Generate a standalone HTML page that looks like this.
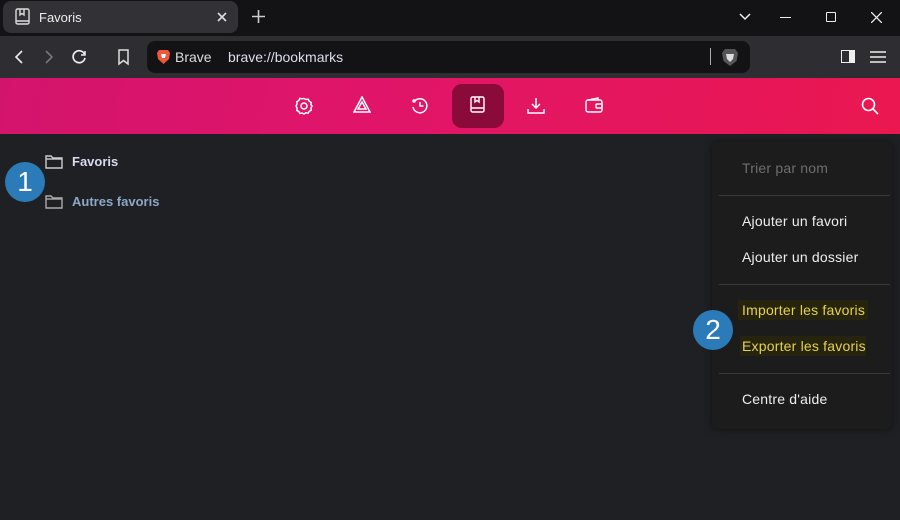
<!DOCTYPE html>
<html><head><style>
*{margin:0;padding:0;box-sizing:border-box}
body{width:900px;height:520px;overflow:hidden;background:#1f2023;font-family:"Liberation Sans",sans-serif;position:relative}
.abs{position:absolute}
svg{position:absolute}
.mi{position:absolute;left:742px;font-size:14px;letter-spacing:0.2px;color:#eeeeee;font-weight:500}
</style></head><body>
<div class="abs" style="left:0;top:0;width:900px;height:36px;background:#131316"></div>
<div class="abs" style="left:3px;top:1px;width:235px;height:32px;background:#323236;border-radius:8px"></div>
<svg style="left:15px;top:8px" width="16" height="18" viewBox="0 0 16 18" fill="none" stroke="#ddd" stroke-width="1.4"><rect x="1" y="1" width="13" height="15" rx="1.5"/><path d="M1 13h13M5 1v6l2-1.5 2 1.5V1"/></svg>
<div class="abs" style="left:39px;top:10px;font-size:13px;color:#eee">Favoris</div>
<svg style="left:217px;top:12px" width="10" height="10" stroke="#ddd" stroke-width="1.6"><path d="M1 1l8 8M9 1l-8 8"/></svg>
<svg style="left:252px;top:10px" width="13" height="13" stroke="#ccc" stroke-width="1.6"><path d="M6.5 0v13M0 6.5h13"/></svg>
<svg style="left:739px;top:13px" width="12" height="8" fill="none" stroke="#eee" stroke-width="1.5"><path d="M1 1l5 5 5-5"/></svg>
<div class="abs" style="left:780px;top:17px;width:11px;height:1px;background:#eee"></div>
<div class="abs" style="left:826px;top:12px;width:10px;height:10px;border:1.3px solid #eee;border-radius:1px"></div>
<svg style="left:871px;top:12px" width="11" height="11" stroke="#eee" stroke-width="1.3"><path d="M0 0l11 11M11 0L0 11"/></svg>
<div class="abs" style="left:0;top:36px;width:900px;height:42px;background:#2e2e32"></div>
<svg style="left:14px;top:50px" width="10" height="14" fill="none" stroke="#eee" stroke-width="1.6"><path d="M8 1L2 7l6 6"/></svg>
<svg style="left:44px;top:50px" width="10" height="14" fill="none" stroke="#777" stroke-width="1.6"><path d="M2 1l6 6-6 6"/></svg>
<svg style="left:71px;top:49px" width="16" height="16" fill="none" stroke="#eee" stroke-width="1.7"><path d="M13.5 5A6 6 0 1 0 14 9"/><path d="M14 2v4h-4" stroke-width="1.5"/></svg>
<svg style="left:117px;top:49px" width="14" height="17" fill="none" stroke="#ddd" stroke-width="1.5"><path d="M2 1h9v14l-4.5-3.5L2 15z"/></svg>
<div class="abs" style="left:147px;top:41px;width:603px;height:32px;background:#131316;border-radius:8px"></div>
<svg style="left:157px;top:49px" width="13" height="15" viewBox="0 0 13 15"><path d="M2 1h9l2 3-1 6-5.5 5L1 10 0 4z" fill="#f1563a"/><path d="M4 5h5l-1 4H5z" fill="#fff"/></svg>
<div class="abs" style="left:175px;top:49px;font-size:14px;color:#ddd">Brave</div>
<div class="abs" style="left:228px;top:49px;font-size:14px;color:#dde">brave://bookmarks</div>
<div class="abs" style="left:710px;top:48px;width:1px;height:17px;background:#aaa"></div>
<svg style="left:722px;top:48px" width="16" height="18" viewBox="0 0 16 18"><path d="M3 1h10l3 4-1.5 8L8 18 1.5 13 0 5z" fill="#555"/><path d="M4 6h8l-1 5-3 3-3-3z" fill="#ddd"/></svg>
<div class="abs" style="left:841px;top:50px;width:14px;height:13px;border:1.5px solid #eee"></div>
<div class="abs" style="left:849px;top:50px;width:6px;height:13px;background:#eee"></div>
<svg style="left:870px;top:51px" width="16" height="12" stroke="#eee" stroke-width="1.4"><path d="M0 1h16M0 6h16M0 11h16"/></svg>
<div class="abs" style="left:0;top:78px;width:900px;height:56px;background:linear-gradient(100deg,#d3146d 0%,#e0156a 40%,#ea1750 100%)"></div>
<div class="abs" style="left:452px;top:84px;width:52px;height:44px;background:#8a0a3a;border-radius:10px"></div>
<svg style="left:295px;top:97px" width="18" height="18" fill="none" stroke="#fff" stroke-width="1.5"><circle cx="9" cy="9" r="3"/><path d="M9 1.5l2 1 2.2-.3 1 2 2 1.3-.3 2.2L17 9l-1 2 .3 2.2-2 1-1.2 2-2.2-.4L9 17l-2-1-2.2.4-1-2-2-1 .3-2.3L1 9l1-2-.2-2.2 2-1.3 1-2 2.2.3z"/></svg>
<svg style="left:353px;top:96px" width="18" height="18" fill="none" stroke="#fff" stroke-width="1.5"><path d="M9 1l8 15H1z"/><path d="M9 6l4 7H5z"/></svg>
<svg style="left:411px;top:97px" width="18" height="18" fill="none" stroke="#fff" stroke-width="1.5"><path d="M3 5a7 7 0 1 1-1 5"/><path d="M9 5v4h3.5"/><circle cx="3" cy="4" r="1" fill="#fff"/></svg>
<svg style="left:470px;top:96px" width="16" height="18" fill="none" stroke="#fff" stroke-width="1.4"><rect x="1" y="1" width="13" height="15" rx="1.5"/><path d="M1 12h13M5 1v5l2-1.5L9 6V1"/></svg>
<svg style="left:527px;top:97px" width="18" height="17" fill="none" stroke="#fff" stroke-width="1.5"><path d="M9 1v10M5 7l4 4 4-4M1 12v4h16v-4"/></svg>
<svg style="left:585px;top:97px" width="18" height="16" fill="none" stroke="#fff" stroke-width="1.4"><rect x="1" y="3" width="16" height="12" rx="2"/><path d="M3 3l10-2v2"/><rect x="11" y="7" width="6" height="4" rx="1"/></svg>
<svg style="left:861px;top:97px" width="18" height="18" fill="none" stroke="#fff" stroke-width="1.6"><circle cx="7.5" cy="7.5" r="6"/><path d="M12 12l5 5"/></svg>
<svg style="left:45px;top:155px" width="18" height="14" fill="none" stroke="#ccc" stroke-width="1.4"><path d="M1 1h5l2 2h9v10H1z"/><path d="M1 4h16"/></svg>
<div class="abs" style="left:72px;top:154px;font-size:13px;font-weight:bold;color:#d8dbf0">Favoris</div>
<svg style="left:45px;top:195px" width="18" height="14" fill="none" stroke="#aaa" stroke-width="1.4"><path d="M1 1h5l2 2h9v10H1z"/><path d="M1 4h16"/></svg>
<div class="abs" style="left:72px;top:194px;font-size:13px;font-weight:bold;color:#8ea6c8">Autres favoris</div>
<div class="abs" style="left:5px;top:162px;width:40px;height:40px;border-radius:50%;background:#2b7bb9;color:#fff;font-size:28px;text-align:center;line-height:40px">1</div>
<div class="abs" style="left:712px;top:142px;width:180px;height:287px;background:#1c1c1c;border-radius:6px;box-shadow:0 0 8px rgba(0,0,0,.5)"></div>
<div class="abs" style="left:719px;top:195px;width:171px;height:1px;background:#3a3a3a"></div>
<div class="abs" style="left:719px;top:284px;width:171px;height:1px;background:#3a3a3a"></div>
<div class="abs" style="left:719px;top:373px;width:171px;height:1px;background:#3a3a3a"></div>
<div class="mi" style="top:160px;color:#6e6e6e">Trier par nom</div>
<div class="mi" style="top:213px">Ajouter un favori</div>
<div class="mi" style="top:249px">Ajouter un dossier</div>
<div class="abs" style="left:738px;top:300px;width:130px;height:20px;background:#26240f"></div>
<div class="mi" style="top:302px;color:#e6d24a">Importer les favoris</div>
<div class="abs" style="left:740px;top:336px;width:126px;height:20px;background:#26240f"></div>
<div class="mi" style="top:338px;color:#e6d24a">Exporter les favoris</div>
<div class="mi" style="top:391px">Centre d'aide</div>
<div class="abs" style="left:693px;top:310px;width:40px;height:40px;border-radius:50%;background:#2b7bb9;color:#fff;font-size:28px;text-align:center;line-height:40px">2</div>
</body></html>
